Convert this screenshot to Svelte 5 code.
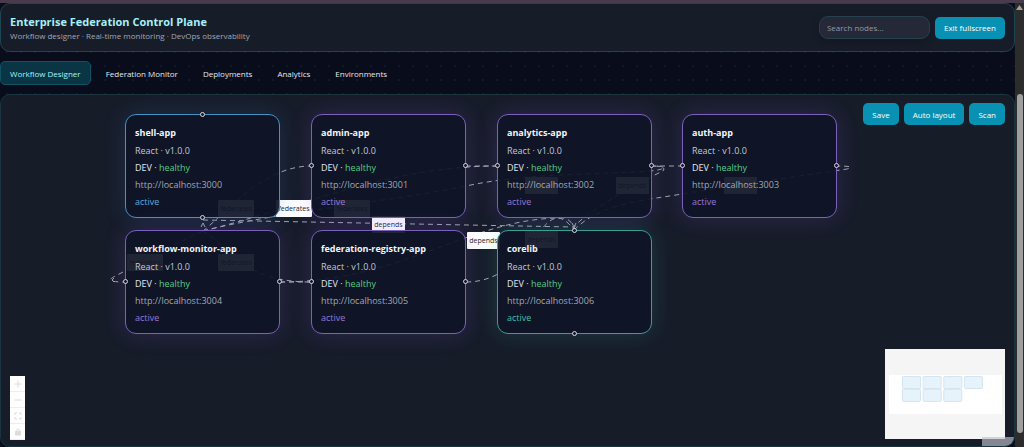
<script>
    let search = '';
    let activeTab = 'Workflow Designer';

    const tabs = ['Workflow Designer', 'Federation Monitor', 'Deployments', 'Analytics', 'Environments'];
    const actions = ['Save', 'Auto layout', 'Scan'];

    const nodes = [
        { name: 'shell-app', kind: 'shell', port: 3000, x: 124, y: 19 },
        { name: 'admin-app', kind: 'remote', port: 3001, x: 310, y: 19 },
        { name: 'analytics-app', kind: 'remote', port: 3002, x: 496, y: 19 },
        { name: 'auth-app', kind: 'remote', port: 3003, x: 681, y: 19 },
        { name: 'workflow-monitor-app', kind: 'remote', port: 3004, x: 124, y: 135 },
        { name: 'federation-registry-app', kind: 'remote', port: 3005, x: 310, y: 135 },
        { name: 'corelib', kind: 'lib', port: 3006, x: 496, y: 135 }
    ];

    const edges = [
        'M202 136 C225 118 262 71 310 71',
        'M202 136 C300 112 390 71 496 71',
        'M202 136 C270 118 400 105 465 91 S600 80 650 76 C666 74 668 71 650 71',
        'M202 136 C170 150 135 170 124 176 S98 187 124 187',
        'M202 136 C230 152 240 187 310 187',
        'M279 187 L310 187',
        'M202 125 L572 132',
        'M465 71 L496 71',
        'M465 187 C535 187 540 90 573 135',
        'M279 187 C400 187 470 123 560 123 Q571 123 573 135',
        'M573 135 C570 125 640 86 662 76 Q667 71 650 71',
        'M573 135 C600 108 640 106 681 99 S820 78 846 74 Q856 71 836 71',
        'M650 71 L681 71'
    ];

    const labels = [
        { text: 'federates', x: 217, y: 105, width: 36 },
        { text: 'federates', x: 275, y: 105, width: 36 },
        { text: 'federates', x: 333, y: 105, width: 36 },
        { text: 'federates', x: 126, y: 159, width: 36 },
        { text: 'federates', x: 217, y: 159, width: 36 },
        { text: 'depends', x: 371, y: 121, width: 33 },
        { text: 'depends', x: 466, y: 137, width: 33 },
        { text: '', x: 524, y: 82, width: 33 },
        { text: 'depends', x: 615, y: 82, width: 33 },
        { text: '', x: 723, y: 82, width: 33 },
        { text: 'depends', x: 524, y: 136, width: 33 }
    ];
</script>

<div class="window">
    <div class="page">
        <header class="topbar">
            <div class="brand">
                <h1>Enterprise Federation Control Plane</h1>
                <p>Workflow designer · Real-time monitoring · DevOps observability</p>
            </div>
            <input type="search" aria-label="Search nodes" placeholder="Search nodes..." bind:value={search} />
            <button class="primary" type="button">Exit fullscreen</button>
        </header>

        <nav class="tabs">
            {#each tabs as tab}
                <button class="tab" class:active={tab === activeTab} type="button" on:click={() => activeTab = tab}>{tab}</button>
            {/each}
        </nav>

        <main class="canvas">
            <svg class="edges" aria-hidden="true">
                {#each edges as d}
                    <path {d} />
                {/each}
                <path class="arrow" d="M200 132 L202 128 L204 132" />
                <path class="arrow" d="M571 128 L573 132 L575 128" />
                <path class="arrow" d="M113 183 L111 185 L113 187" />
                {#each labels as label}
                    <rect x={label.x} y={label.y} width={label.width} height="17" rx="1" />
                    {#if label.text !== ''}
                        <text x={label.x + label.width / 2} y={label.y + 11}>{label.text}</text>
                    {/if}
                {/each}
            </svg>

            {#each nodes as node}
                <article class="node {node.kind}" style="left:{node.x}px; top:{node.y}px">
                    <h2>{node.name}</h2>
                    <p>React · v1.0.0</p>
                    <p class="env">DEV · <span>healthy</span></p>
                    <p class="url">http://localhost:{node.port}</p>
                    <p class="state">active</p>
                    <i class="handle first"></i>
                    <i class="handle last"></i>
                </article>
            {/each}

            <div class="actions">
                {#each actions as action}
                    <button class="primary" type="button">{action}</button>
                {/each}
            </div>

            <div class="controls">
                <button type="button" aria-label="Zoom in">
                    <svg viewBox="0 0 8 8"><path d="M4 0.5V7.5M0.5 4H7.5" /></svg>
                </button>
                <button type="button" aria-label="Zoom out">
                    <svg viewBox="0 0 8 8"><path d="M0.5 4H7.5" /></svg>
                </button>
                <button type="button" aria-label="Fit view">
                    <svg viewBox="0 0 8 8"><path d="M1 3V1H3M5 1H7V3M7 5V7H5M3 7H1V5" /></svg>
                </button>
                <button type="button" aria-label="Lock">
                    <svg viewBox="0 0 8 8"><path d="M2.5 3.5V2Q4 0 5.5 2V3.5" /><path class="solid" d="M1.5 3.5H6.5V7H1.5Z" /></svg>
                </button>
            </div>

            <span class="attribution"></span>
            <svg class="minimap" viewBox="0 0 120 90" aria-hidden="true">
                <rect width="120" height="90" fill="#f5f5f5" />
                <rect x="4" y="26" width="113" height="39" fill="#fff" />
                {#each nodes as node}
                    <rect class="mini" x={17.5 + (node.x - 124) / 9} y={27.5 + (node.y - 19) / 9} width="18" height="12" rx="1" />
                {/each}
            </svg>
        </main>
    </div>

    <div class="scrollbar">
        <svg viewBox="0 0 9 8"><path d="M4.5 2L8 7H1Z" /></svg>
        <div class="thumb"></div>
    </div>
</div>

<style>
    :global(body) {
        margin: 0;
        background: #090d1b;
    }

    .window {
        display: flex;
        box-sizing: border-box;
        min-height: 100vh;
        border-top: 3px solid #483b4c;
        font-family: "Segoe UI", "Open Sans", "Noto Sans", sans-serif;
        font-size: 8px;
        color: #e2e8f0;
    }

    .page {
        flex: 1;
        min-width: 0;
        display: flex;
        flex-direction: column;
        gap: 9px;
        background-color: #090d1b;
        background-image: radial-gradient(circle, #121a2a 1px, transparent 1px);
        background-size: 14px 14px;
    }

    button, input {
        box-sizing: border-box;
        margin: 0;
        font: inherit;
    }

    .topbar {
        display: flex;
        align-items: center;
        gap: 5px;
        box-sizing: border-box;
        height: 49px;
        padding: 0 9px;
        border: 1px solid #1c4650;
        border-radius: 10px;
        background: #171c29;
    }

    .brand {
        flex: 1;
    }

    h1 {
        margin: 0;
        font-size: 11px;
        line-height: 15px;
        font-weight: 700;
        color: #a5f0fa;
    }

    .brand p {
        margin: 0;
        line-height: 13px;
        color: #a0a7b4;
    }

    input {
        width: 111px;
        height: 23px;
        padding: 0 7px;
        border: 1px solid #26404e;
        border-radius: 9px;
        outline: none;
        background: #252837;
        color: #e2e8f0;
        box-shadow: 0 3px 10px rgba(0, 0, 0, .2);
    }

    input::placeholder {
        color: #9399a5;
        opacity: 1;
    }

    .primary {
        height: 22px;
        padding: 0 9px;
        border: 0;
        border-radius: 5px;
        background: #0891b2;
        color: #fff;
        white-space: nowrap;
    }

    .tabs {
        display: flex;
        gap: 5px;
    }

    .tab {
        height: 24px;
        padding: 0 9px;
        border: 1px solid transparent;
        border-radius: 5px;
        background: none;
        color: #e2e8f0;
    }

    .tab.active {
        border-color: #105263;
        background: #093544;
        color: #a5f3fc;
    }

    .canvas {
        position: relative;
        flex: 1;
        min-height: 330px;
        border: 1px solid #1a3440;
        border-radius: 10px;
        background: #171c29;
        overflow: hidden;
    }

    .edges {
        position: absolute;
        z-index: 1;
        width: 100%;
        height: 100%;
    }

    .edges path {
        fill: none;
        stroke: #a2a6b0;
        stroke-width: 1;
        stroke-dasharray: 5 4;
    }

    .edges .arrow {
        stroke-dasharray: none;
    }

    .edges rect {
        fill: #fff;
    }

    .edges text {
        font-size: 7px;
        text-anchor: middle;
        fill: #1e1e28;
    }

    .node {
        --accent: #7c60bb;
        --text: #9678d8;
        --glow: rgba(139, 92, 246, .2);
        position: absolute;
        z-index: 2;
        box-sizing: border-box;
        width: 155px;
        height: 104px;
        padding: 9px;
        border: 1px solid var(--accent);
        border-radius: 11px;
        background: rgba(15, 20, 39, .93);
        box-shadow: 0 0 22px var(--glow);
        font-size: 9px;
    }

    .node.shell {
        --accent: #4692c2;
        --text: #5ba9df;
        --glow: rgba(56, 130, 210, .2);
    }

    .node.lib {
        --accent: #3e9c96;
        --text: #43bda7;
        --glow: rgba(45, 190, 180, .2);
    }

    .node h2 {
        margin: 0 0 1px;
        font-size: 9px;
        line-height: 17px;
        font-weight: 700;
        color: #f1f5f9;
    }

    .node p {
        margin: 0;
        line-height: 17px;
        color: #c2c8d2;
    }

    .node .env {
        color: #e2e8f0;
    }

    .env span {
        color: #57ca87;
    }

    .node .url {
        color: #a0a7b4;
    }

    .node .state {
        color: var(--text);
    }

    .handle {
        position: absolute;
        box-sizing: border-box;
        width: 5px;
        height: 5px;
        border: 1px solid #d5d8de;
        border-radius: 50%;
        background: #1a192b;
    }

    .handle.first {
        left: -3px;
        top: 48px;
    }

    .handle.last {
        right: -3px;
        top: 48px;
    }

    .shell .handle, .lib .handle {
        left: 74px;
        right: auto;
    }

    .shell .first, .lib .first {
        top: -3px;
    }

    .shell .last, .lib .last {
        top: auto;
        bottom: -3px;
    }

    .actions {
        position: absolute;
        z-index: 3;
        top: 8px;
        right: 9px;
        display: flex;
        gap: 5px;
    }

    .controls {
        position: absolute;
        z-index: 3;
        left: 9px;
        bottom: 6px;
        display: flex;
        flex-direction: column;
        width: 15px;
        background: #fff;
    }

    .controls button {
        display: flex;
        align-items: center;
        justify-content: center;
        height: 16px;
        padding: 0;
        border: 0;
        border-bottom: 1px solid #eee;
        background: #fefefe;
    }

    .controls svg {
        width: 8px;
        height: 8px;
        fill: none;
        stroke: #dcdcdc;
    }

    .controls .solid {
        fill: #dcdcdc;
    }

    .minimap {
        position: absolute;
        z-index: 3;
        right: 9px;
        bottom: 7px;
        width: 120px;
        height: 90px;
    }

    .mini {
        fill: #e6f3fb;
        stroke: #d3e5f0;
    }

    .attribution {
        position: absolute;
        z-index: 4;
        right: 0;
        bottom: 0;
        width: 32px;
        height: 9px;
        background: rgba(190, 192, 202, .65);
    }

    .scrollbar {
        display: flex;
        flex-direction: column;
        width: 9px;
        background: #2c2c2c;
    }

    .scrollbar svg {
        width: 9px;
        height: 8px;
        margin-bottom: 83px;
        fill: #9f9f9f;
    }

    .thumb {
        flex: 1;
        width: 6px;
        margin: 0 1px 14px 2px;
        border-radius: 3px;
        background: #9f9f9f;
    }
</style>
